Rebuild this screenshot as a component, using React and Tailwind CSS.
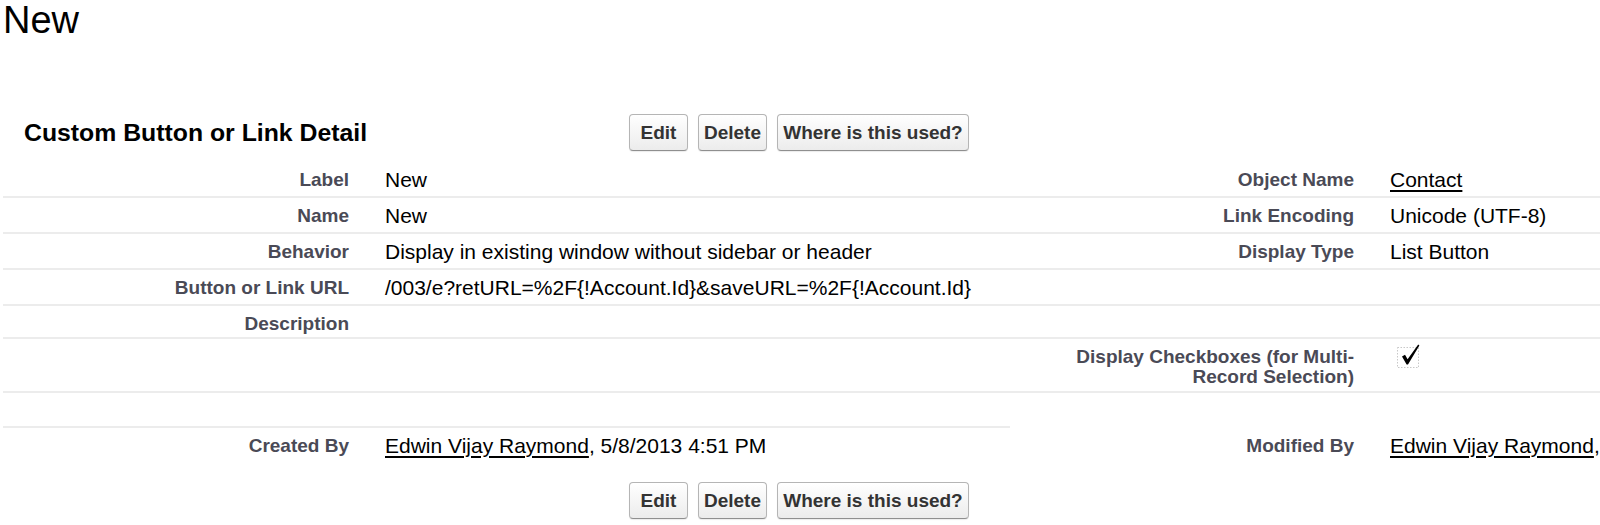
import React from "react";

const FONT = { fontFamily: '"Liberation Sans", Arial, Helvetica, sans-serif' };

function Btn({ w, children }) {
  return (
    <button
      className={`${w} h-[37px] rounded-[4px] border border-[#b5b5b5] border-b-[#8f8f8f] bg-gradient-to-b from-white to-[#ececec] text-[19px] font-bold text-[#333] leading-none flex items-center justify-center shadow-[0_1px_1px_rgba(0,0,0,0.08)]`}
    >
      {children}
    </button>
  );
}

function Buttons() {
  return (
    <div className="flex gap-[10px]">
      <Btn w="w-[59px]">Edit</Btn>
      <Btn w="w-[69px]">Delete</Btn>
      <Btn w="w-[192px]">Where is this used?</Btn>
    </div>
  );
}

const labelCls = "pr-[18px] text-right font-bold text-[19px] leading-[20px] text-[#4a4a56] pt-[8px]";
const valueCls = "pl-[18px] text-[21px] leading-[20px] text-black pt-[8px] whitespace-nowrap";
const line = "border-b-2 border-[#ececec]";

function Link({ children }) {
  return <span className="underline decoration-[1.5px] underline-offset-[3px]">{children}</span>;
}

function Check() {
  return (
    <svg width="26" height="26" viewBox="0 0 26 26" className="ml-[7px] -mt-[4px]">
      <rect x="0.5" y="4.5" width="21" height="20" fill="none" stroke="#c8c8c8" strokeDasharray="1.5 1.5" />
      <path d="M5 13.5 L8 11.8 L10.6 16.2 L21.2 1.6 L22.4 2.4 L11 21.5 L9.6 21.5 Z" fill="#000" />
    </svg>
  );
}

export default function App() {
  return (
    <div className="w-[1600px] h-[525px] overflow-hidden bg-white text-black" style={FONT}>
      <h1 className="m-0 pl-[3px] pt-[0px] text-[38px] leading-[40px] font-normal">New</h1>

      <div className="flex items-center h-[41px] mt-[72px]">
        <div className="w-[629px] pl-[24px] text-[24.8px] font-bold text-black">Custom Button or Link Detail</div>
        <Buttons />
      </div>

      <div className="ml-[3px] mt-[9px] w-[1699px] grid grid-cols-[364px_643px_362px_330px]">
        {/* row 1 */}
        <div className={`${labelCls} ${line} h-[36px]`}>Label</div>
        <div className={`${valueCls} ${line} h-[36px]`}>New</div>
        <div className={`${labelCls} ${line} h-[36px]`}>Object Name</div>
        <div className={`${valueCls} ${line} h-[36px]`}><Link>Contact</Link></div>
        {/* row 2 */}
        <div className={`${labelCls} ${line} h-[36px]`}>Name</div>
        <div className={`${valueCls} ${line} h-[36px]`}>New</div>
        <div className={`${labelCls} ${line} h-[36px]`}>Link Encoding</div>
        <div className={`${valueCls} ${line} h-[36px]`}>Unicode (UTF-8)</div>
        {/* row 3 */}
        <div className={`${labelCls} ${line} h-[36px]`}>Behavior</div>
        <div className={`${valueCls} ${line} h-[36px]`}>Display in existing window without sidebar or header</div>
        <div className={`${labelCls} ${line} h-[36px]`}>Display Type</div>
        <div className={`${valueCls} ${line} h-[36px]`}>List Button</div>
        {/* row 4 */}
        <div className={`${labelCls} ${line} h-[36px]`}>Button or Link URL</div>
        <div className={`${valueCls} ${line} h-[36px]`}>/003/e?retURL=%2F&#123;!Account.Id&#125;&amp;saveURL=%2F&#123;!Account.Id&#125;</div>
        <div className={`${labelCls} ${line} h-[36px]`}></div>
        <div className={`${valueCls} ${line} h-[36px]`}></div>
        {/* row 5 */}
        <div className={`${labelCls} ${line} h-[33px]`}>Description</div>
        <div className={`${valueCls} ${line} h-[33px]`}></div>
        <div className={`${labelCls} ${line} h-[33px]`}></div>
        <div className={`${valueCls} ${line} h-[33px]`}></div>
        {/* row 6 */}
        <div className={`${labelCls} ${line} h-[54px]`}></div>
        <div className={`${valueCls} ${line} h-[54px]`}></div>
        <div className={`${labelCls} ${line} h-[54px]`}>
          Display Checkboxes (for Multi-
          <br />
          Record Selection)
        </div>
        <div className={`${valueCls} ${line} h-[54px]`}><Check /></div>
        {/* row 7 */}
        <div className={`${labelCls} ${line} h-[35px]`}></div>
        <div className={`${valueCls} ${line} h-[35px]`}></div>
        <div className={`${labelCls} h-[35px]`}></div>
        <div className={`${valueCls} h-[35px]`}></div>
        {/* row 8 */}
        <div className={`${labelCls} h-[36px]`}>Created By</div>
        <div className={`${valueCls} h-[36px]`}><Link>Edwin Vijay Raymond</Link>, 5/8/2013 4:51 PM</div>
        <div className={`${labelCls} h-[36px]`}>Modified By</div>
        <div className={`${valueCls} h-[36px]`}><Link>Edwin Vijay Raymond</Link>, 5/8/2013 4:51 PM</div>
      </div>

      <div className="flex items-center h-[41px] mt-[16px] pl-[629px]">
        <Buttons />
      </div>
    </div>
  );
}
